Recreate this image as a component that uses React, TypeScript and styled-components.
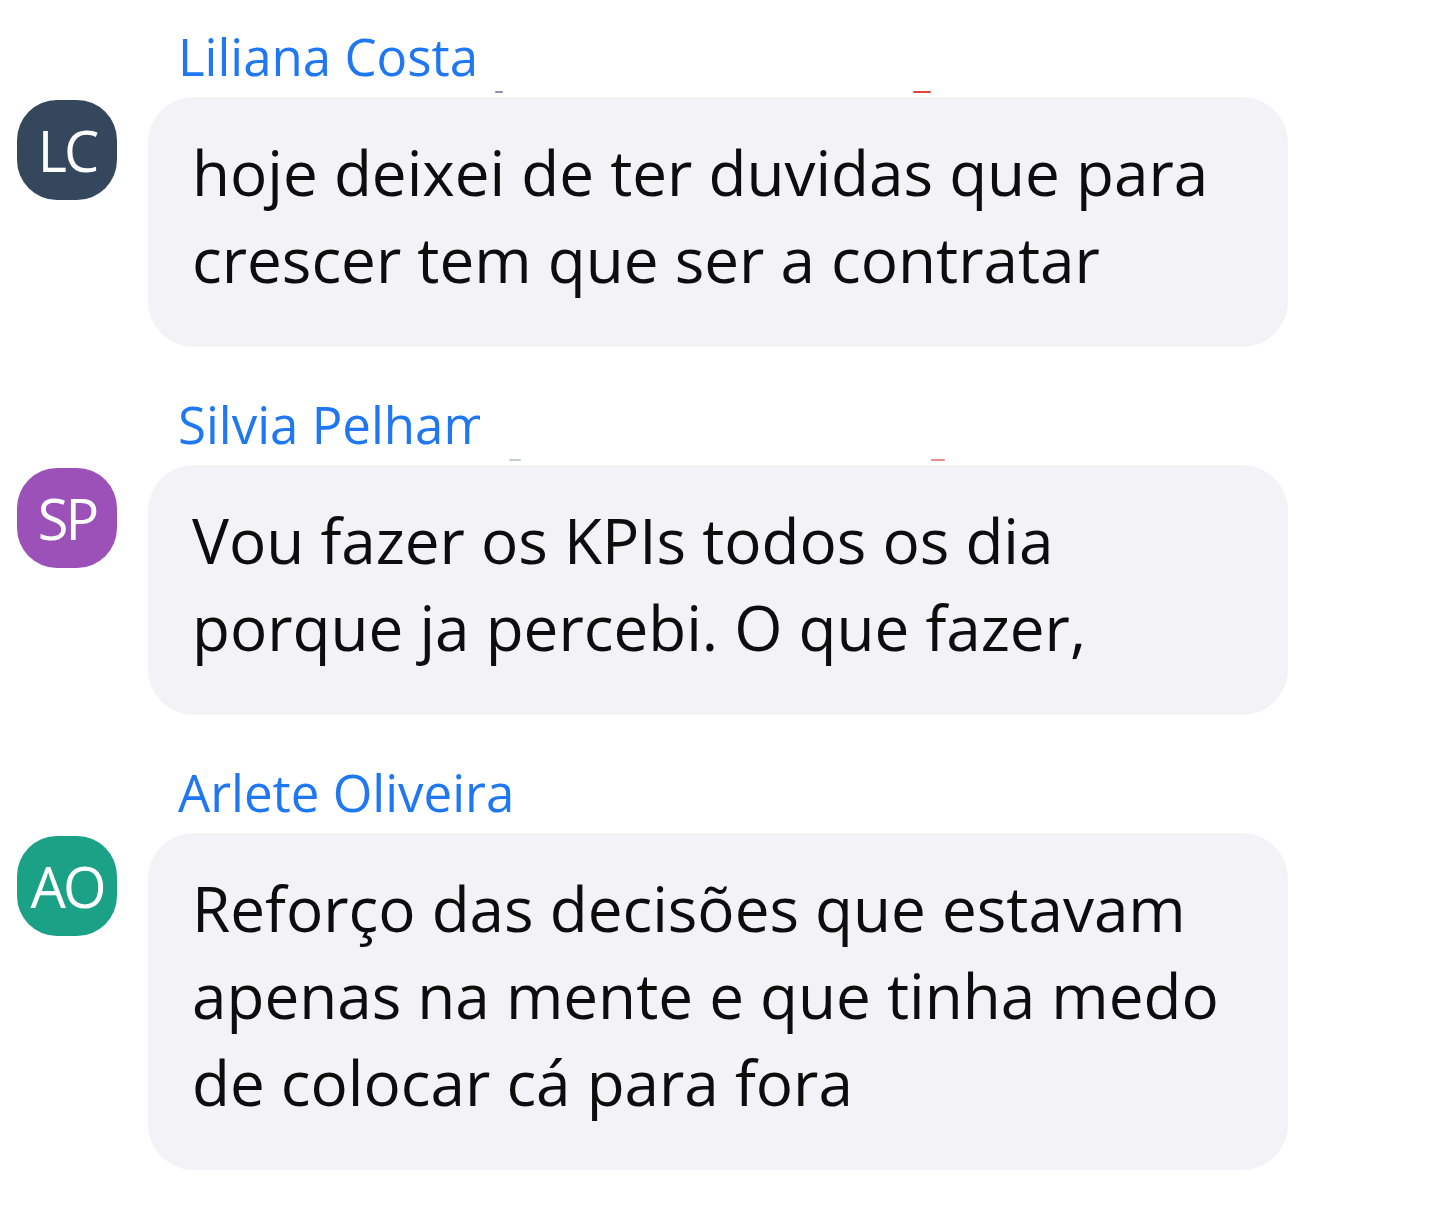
import React from "react";
import styled, { createGlobalStyle } from "styled-components";

const GlobalStyle = createGlobalStyle`
  html, body {
    margin: 0;
    padding: 0;
    background: #ffffff;
  }
  body {
    font-family: "Open Sans", "Noto Sans", "Liberation Sans", sans-serif;
  }
`;

const Feed = styled.div`
  display: flex;
  flex-direction: column;
  row-gap: 48px;
  padding: 27px 0 0 17px;
  width: 1271px;
`;

const Message = styled.div`
  display: flex;
  flex-direction: column;
`;

// the second sender's name is cut by its box in the original, hence $clip
const Name = styled.div<{ $clip?: number }>`
  margin-left: 161px;
  height: 60px;
  line-height: 58px;
  font-size: 51px;
  color: #1f78f2;
  white-space: nowrap;
  ${(p) =>
    p.$clip ? `max-width: ${p.$clip}px; overflow-x: clip; overflow-y: visible;` : ""}
`;

const MarkRow = styled.div`
  display: flex;
  align-items: center;
  height: 10px;
`;

const Mark = styled.span<{ $left: number; $width: number; $color: string }>`
  margin-left: ${(p) => p.$left}px;
  width: ${(p) => p.$width}px;
  height: 2px;
  border-radius: 1px;
  background: ${(p) => p.$color};
`;

const Row = styled.div`
  display: flex;
  align-items: flex-start;
  column-gap: 31px;
`;

const Avatar = styled.div<{ $bg: string }>`
  flex: none;
  width: 100px;
  height: 100px;
  margin-top: 3px;
  border-radius: 40px;
  background: ${(p) => p.$bg};
  color: #ffffff;
  font-size: 56px;
  display: flex;
  align-items: center;
  justify-content: center;
  letter-spacing: -3px;
`;

const Bubble = styled.div`
  flex: 1;
  background: #f2f2f7;
  border-radius: 46px;
  padding: 32px 40px 44px 44px;
  font-size: 62px;
  line-height: 87px;
  color: #0d0d0d;
`;

type Msg = {
  name: string;
  initials: string;
  color: string;
  lines: string[];
  clip?: number;
  marks?: { left: number; width: number; color: string }[];
};

const messages: Msg[] = [
  {
    name: "Liliana Costa",
    initials: "LC",
    color: "#34475c",
    lines: ["hoje deixei de ter duvidas que para", "crescer tem que ser a contratar"],
    marks: [
      { left: 478, width: 8, color: "#8a93a8" },
      { left: 410, width: 18, color: "#e0453a" },
    ],
  },
  {
    name: "Silvia Pelham",
    initials: "SP",
    color: "#9b51b8",
    clip: 302,
    lines: ["Vou fazer os KPIs todos os dia", "porque ja percebi. O que fazer,"],
    marks: [
      { left: 492, width: 12, color: "#c9ccd3" },
      { left: 410, width: 14, color: "#ef8a86" },
    ],
  },
  {
    name: "Arlete Oliveira",
    initials: "AO",
    color: "#1ba185",
    lines: [
      "Reforço das decisões que estavam",
      "apenas na mente e que tinha medo",
      "de colocar cá para fora",
    ],
  },
];

export default function App() {
  return (
    <>
      <GlobalStyle />
      <Feed>
        {messages.map((m) => (
          <Message key={m.name}>
            <Name $clip={m.clip}>{m.name}</Name>
            <MarkRow>
              {(m.marks ?? []).map((k, i) => (
                <Mark key={i} $left={k.left} $width={k.width} $color={k.color} />
              ))}
            </MarkRow>
            <Row>
              <Avatar $bg={m.color}>{m.initials}</Avatar>
              <Bubble>
                {m.lines.map((l, i) => (
                  <div key={i}>{l}</div>
                ))}
              </Bubble>
            </Row>
          </Message>
        ))}
      </Feed>
    </>
  );
}
